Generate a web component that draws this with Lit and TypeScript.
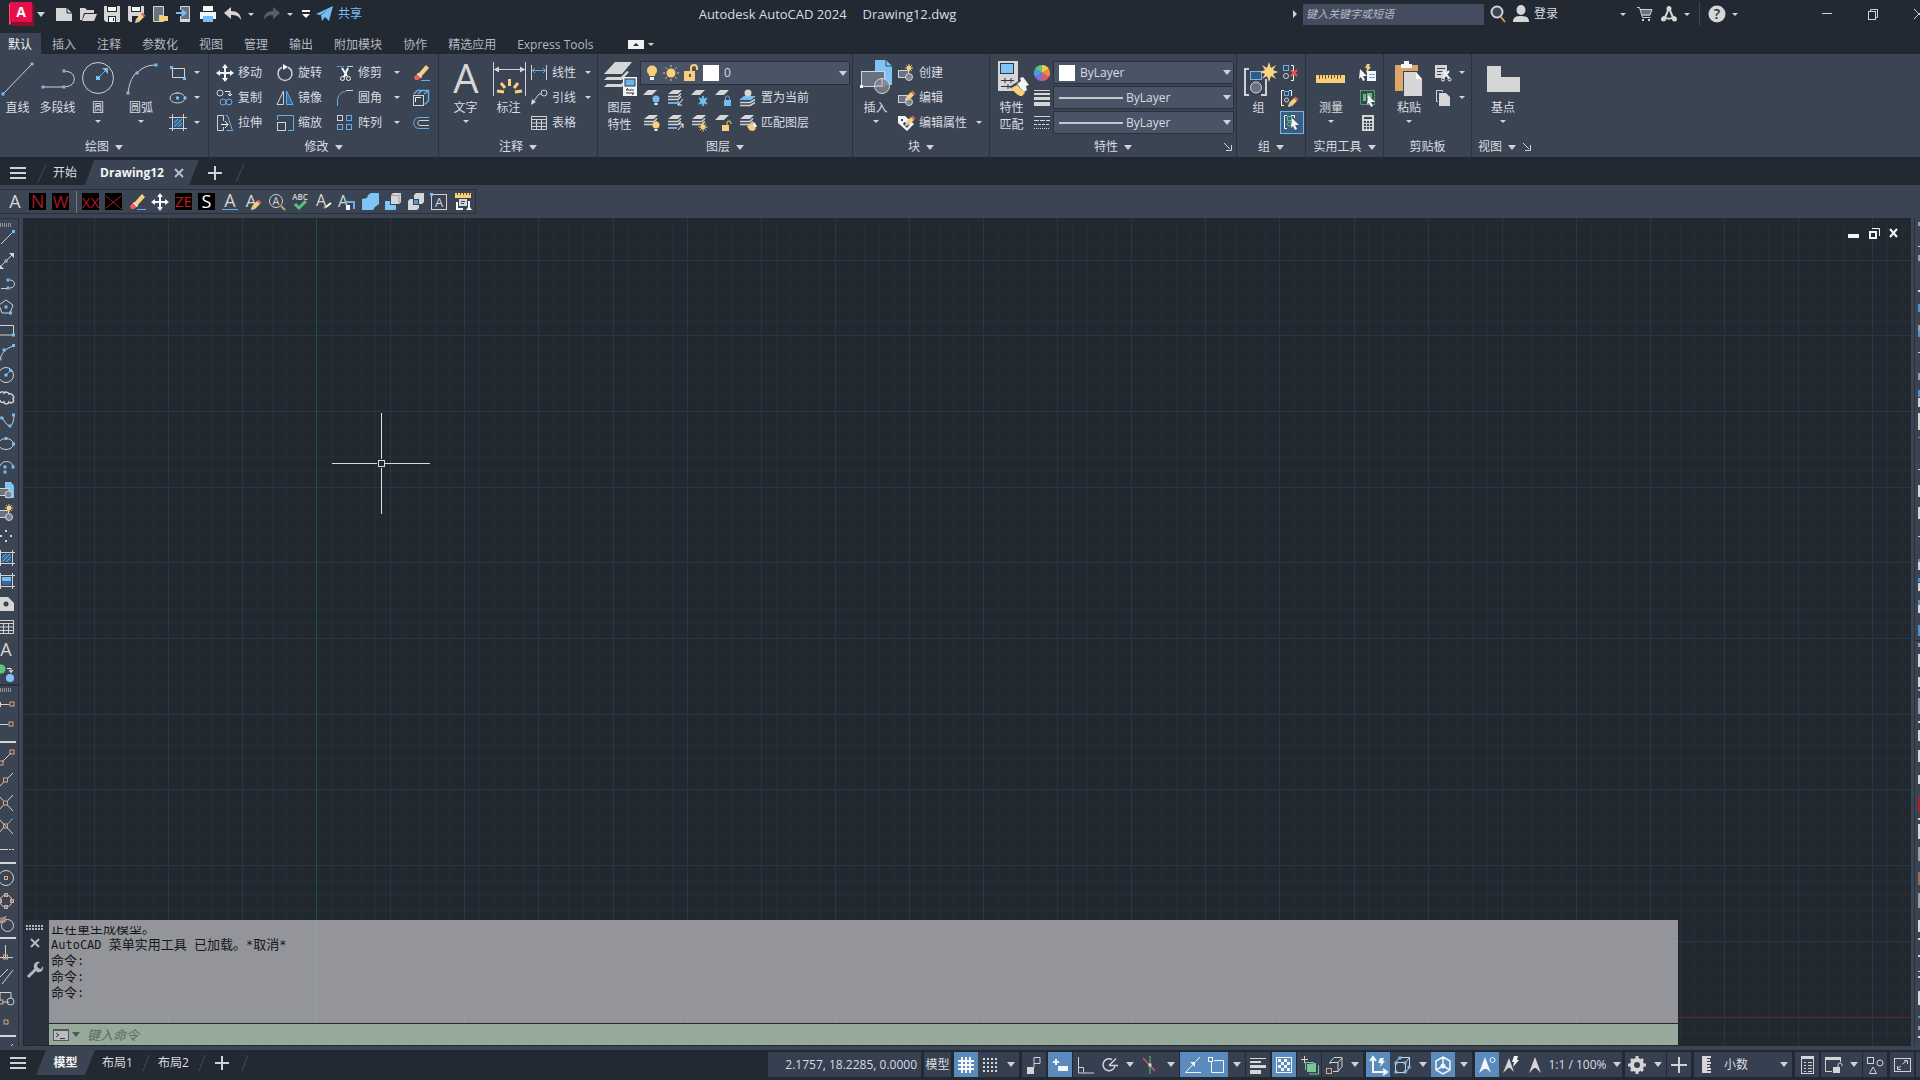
import { LitElement, html, css, svg, nothing } from "lit";
import { customElement, state } from "lit/decorators.js";
import { classMap } from "lit/directives/class-map.js";

/* ---------- icon drawing helpers ---------- */
const sq = (x: number, y: number, c = "bf", s = 3) =>
  svg`<rect class=${c} x=${x - s / 2} y=${y - s / 2} width=${s} height=${s}></rect>`;
const box = (x: number, y: number, s = 4) =>
  svg`<rect class="o" x=${x - s / 2} y=${y - s / 2} width=${s} height=${s}></rect>`;
const sheets = (x = 0, y = 0) => svg`
  <path class="wf" d="M${x + 5} ${y}h9l-4 4h-10z"></path>
  <path class="w" stroke-width="1.500" d="M${x} ${y + 6.5}h10l3-3M${x} ${y + 9.5}h10l3-3"></path>`;
const pencil = (x: number, y: number) => svg`
  <path class="yf" d="M${x} ${y + 5}l5-5 3 3-5 5z"></path>
  <path class="rf" d="M${x + 5} ${y}l1.500-1.500 3 3-1.500 1.500z"></path>
  <path class="wf" d="M${x} ${y + 5}l3 3-4 1z"></path>`;
const star = (x: number, y: number, r: number) => svg`
  <path class="y" d="M${x - r} ${y}h${2 * r}M${x} ${y - r}v${2 * r}M${x - r * 0.7} ${y - r * 0.7}l${r * 1.4} ${r * 1.4}M${x - r * 0.7} ${y + r * 0.7}l${r * 1.4} ${-r * 1.4}"></path>
  <circle class="yf" cx=${x} cy=${y} r=${r * 0.55}></circle>`;
const shapes = svg`
  <rect class="gf" x="1" y="7" width="10" height="7"></rect>
  <rect class="w" x="1.500" y="6.500" width="10" height="7"></rect>
  <circle class="gw" cx="12" cy="13" r="3.500"></circle>`;
const cursor = (x: number, y: number) =>
  svg`<path class="hf" d="M${x} ${y}l7 7h-4l2 4-2 1-2-4-2 2z"></path>`;
const bulb = (x: number, y: number, c: string) => svg`
  <circle class=${c} cx=${x} cy=${y} r="3.500"></circle>
  <rect class="hf" x=${x - 1.5} y=${y + 4} width="3" height="2"></rect>`;
const lock = (x: number, y: number, c: string, s: string, open: boolean) => svg`
  <path class=${s} d=${open ? `M${x + 5} ${y}v-2a2 2 0 0 1 4 0v1` : `M${x + 1.5} ${y}v-2a2 2 0 0 1 4 0v2`}></path>
  <rect class=${c} x=${x} y=${y} width="7" height="6"></rect>`;

const ICONS: Record<string, [number, number, unknown]> = {
  logo: [25, 24, svg`<path fill="#8e1030" d="M2 2h23v22H3z"></path><path fill="#ff4a72" d="M0 2l2-2v22l-2 1z"></path>
    <rect x="1" y="0" width="22" height="20" rx="1" fill="#e60f4a"></rect>
    <text x="12" y="15" text-anchor="middle" font-size="14" font-weight="700" fill="#fff">A</text>`],
  new: [18, 18, svg`<path class="wf" d="M1 3h11l5 5v8H1z"></path><path d="M12 3v5h5" stroke="#222933" fill="none"></path>`],
  open: [18, 18, svg`<path class="wf" d="M1 3h5l2 2h7v3H5l-2 7H1z"></path><path class="wf" d="M6 9h12l-3 7H3z"></path>`],
  save: [18, 18, svg`<path class="wf" d="M1 1h16v16H3l-2-2z"></path><path fill="#222933" d="M4 1h10v6H4zM5 11h8v6H5z"></path><path class="hf" d="M5 2h8v4H5zM6 12h6v5H6z"></path><path fill="#222933" d="M10 13h1v3h-1z"></path>`],
  saveas: [18, 18, svg`<path class="wf" d="M1 1h16v8l-8 8H3l-2-2z"></path><path fill="#222933" d="M4 1h10v6H4zM5 11h6v6H5z"></path><path class="hf" d="M5 2h8v4H5z"></path>${pencil(9, 9)}`],
  mobopen: [18, 18, svg`<rect class="gf" x="2" y="1" width="11" height="15"></rect><path class="w" d="M2.500 1.500h10v15h-10z"></path><path class="yf" d="M8 10h4l1 1h4v5H8z"></path>`],
  mobsave: [18, 18, svg`<rect class="gf" x="6" y="2" width="8" height="13"></rect><path class="w" d="M5.500 5V1.500h9v15h-9V11"></path><path class="wf" d="M5 14h10v3H5z"></path><path class="bf" d="M1 7h6V4l5 4-5 4V9H1z"></path>`],
  print: [18, 18, svg`<path class="hf" d="M4 1h10v5H4zM1 7h16v7H1z"></path><path class="bf" d="M4 11h10v6H4z"></path>`],
  undo: [18, 18, svg`<path class="wf" d="M0 8l7-6v4c6 0 10 3 10 9-2-4-5-5-10-5v4z"></path>`],
  redo: [18, 18, svg`<path fill="#575e69" d="M17 8l-7-6v4C4 6 1 9 1 15c2-4 5-5 9-5v4z"></path>`],
  qat: [10, 10, svg`<path class="hf" d="M1 1h8v2H1zM1 5h8l-4 4z"></path>`],
  plane: [18, 18, svg`<path class="bf" d="M0 9l17-8-4 15-4-4-3 4-1-6 8-6-9 6z"></path>`],
  search: [18, 18, svg`<circle class="gw2" cx="8" cy="7" r="5.500"></circle><path stroke="#d69a5c" stroke-width="2" d="M12 12l4 5"></path>`],
  user: [18, 18, svg`<ellipse class="wf" cx="9" cy="5" rx="4.500" ry="5"></ellipse><path class="wf" d="M1 17c0-5 3-6 8-6s8 1 8 6z"></path>`],
  cart: [18, 18, svg`<path class="gf" d="M4 4h12l-2 7H6z"></path><path class="w" d="M1 2.500h2.500l3 10h8M4 4.500h12l-2 5.500H6"></path><path class="wf" d="M6 14h2v2H6zM12 14h2v2h-2z"></path>`],
  apps: [18, 18, svg`<path class="w2" d="M9 3L4 15M9 3l5 12M3 11.500c4 3 8 3 12 0"></path><circle class="wf" cx="9" cy="3.500" r="2.500"></circle><circle class="wf" cx="3.500" cy="14" r="2.500"></circle><circle class="wf" cx="14.500" cy="14" r="2.500"></circle>`],
  help: [18, 18, svg`<circle class="wf" cx="9" cy="9" r="8.500"></circle><text x="9" y="14" text-anchor="middle" font-size="14" font-weight="600" fill="#222933">?</text>`],
  min: [14, 14, svg`<path class="w" d="M2 6.500h10"></path>`],
  restore: [14, 14, svg`<rect class="w" x="2.500" y="4.500" width="7" height="8"></rect><path class="w" d="M4.500 4V2.500h7v8H10"></path>`],
  close: [14, 14, svg`<path class="w" d="M2 2l10 10M12 2L2 12"></path>`],

  line: [36, 36, svg`<path class="w" d="M3 34L32 4"></path>${sq(3, 34)}${sq(32, 4)}`],
  pline: [36, 36, svg`<path class="w" d="M3 27h20M26 11.500c11 0 11 15 0 15"></path>${sq(3, 27)}${sq(24, 27)}${sq(24, 11)}`],
  circle: [36, 36, svg`<circle class="w" cx="18" cy="18" r="15.500"></circle><path class="b" d="M18 18l7-7"></path><path class="bf" d="M28 8v6l-6-6z"></path>${sq(18, 18, "bf", 4)}`],
  arc: [36, 36, svg`<path class="w" d="M5 33C6 25 8 18 13 13M15 12C20 7 26 5 33 5"></path>${sq(5, 33)}${sq(14, 13)}${sq(33, 5)}`],
  text: [36, 36, svg`<text class="wf" x="18" y="33" text-anchor="middle" font-size="40">A</text>`],
  dim: [36, 36, svg`<path class="w" d="M2.500 2v34M34.500 2v34M3 9.500h31"></path><path class="wf" d="M3 9.500l5-3v6zM34 9.500l-5-3v6z"></path>
    <path stroke="#f9cf7a" stroke-width="3" d="M18.500 19v7M10 23l4 5M27 23l-4 5M6 31l7 1M31 31l-7 1"></path>`],
  layers: [36, 36, svg`<path class="wf" d="M13 2h17L20 14H2zM5 17h14l6-6 2 1-7 8H2zM5 24h14l6-6 2 1-7 8H2z"></path>
    <rect class="hf" x="21" y="17" width="14" height="19"></rect><rect x="23" y="19" width="10" height="7" fill="#67b7ef" stroke="#2e3643"></rect>
    <path stroke="#2e3643" fill="none" d="M24 30h8M24 30l2-2M24 33h8M32 33l-2 2"></path>`],
  insert: [36, 36, svg`<path fill="#7fc4f6" d="M17 0h11l6 6v19H17z"></path><path d="M28 0v6h6" stroke="#3b4453" fill="none"></path>
    <rect x="3.500" y="11.500" width="23" height="15" fill="#6a7180" stroke="#d6d6d6"></rect><circle cx="24" cy="26" r="7.500" fill="#7d838f" fill-opacity=".8" stroke="#d6d6d6"></circle>
    <path class="w" d="M24 18v8h-7"></path>${sq(3.5, 26.5, "hf")}`],
  matchprop: [36, 36, svg`<rect class="wf" x="4" y="1" width="20" height="30"></rect><rect x="6.500" y="3.500" width="13" height="10" fill="#7fc4f6" stroke="#2e3643"></rect>
    <path stroke="#2e3643" fill="none" d="M7 20.500h13M7 26.500h9M11 18v5M14 24v5M17 18v5"></path>
    <path fill="#3b4453" d="M15 27l13-8 8 8-8 9z"></path><path class="yf" d="M17 28l6-3 8 8-3 3c-4 0-8-4-11-8z"></path><path class="hf" d="M23 24l4-3-1-3 3-1 6 8-3 1 1 4-3 2z"></path>`],
  group: [36, 36, svg`<path class="w2" d="M8 9H4v26h4M20 35h5V19"></path><rect x="9.500" y="11.500" width="11" height="8" fill="#375a7c" stroke="#6cb8ef"></rect>
    <circle cx="15" cy="27.500" r="5.500" fill="#6a7180" stroke="#d6d6d6"></circle>
    <path fill="#fcd583" d="M28 2l2 6 5-3-3 5 5 2-5 2 3 5-5-3-2 6-2-6-5 3 3-5-5-2 5-2-3-5 5 3z"></path>`],
  measure: [36, 36, svg`<path class="yf" d="M3 15h29v8H3z"></path><path stroke="#6b5527" d="M6.500 15v4M9.500 15v3M12.500 15v4M15.500 15v3M18.500 15v4M21.500 15v3M24.500 15v4M27.500 15v3"></path>`],
  paste: [36, 36, svg`<path fill="#dba869" d="M4 5h23v26H4z"></path><path class="hf" d="M10 4h3V1h5v3h3v4H10z"></path><path fill="#3b4453" d="M12 11h15v20H12z"></path><path class="wf" d="M13 12h12l6 7v17H13z"></path><path fill="#fff" d="M25 12v7h6z"></path>`],
  base: [36, 36, svg`<path class="wf" d="M2 6h14v11h19v15H2z"></path>`],

  rect: [18, 18, svg`<path class="w" d="M3.500 4.500h12v9h-12z"></path>${sq(2.5, 3.5)}${sq(15.5, 14.5)}`],
  ellipse: [18, 18, svg`<ellipse class="w" cx="8.500" cy="9" rx="7.500" ry="5"></ellipse>${sq(8.5, 9)}${sq(8.5, 4, "bf", 2)}${sq(16, 9, "bf", 3)}`],
  hatch: [18, 18, svg`<path class="w" d="M3.500 0v17M14.500 0v17M0 3.500h18M0 14.500h18"></path><rect x="5" y="5" width="8" height="8" fill="#34679a"></rect><path class="b" d="M5 9l4-4M5 13l8-8M9 13l4-4"></path>`],
  move: [18, 18, svg`<path class="h2" d="M9 3v12M3 9h12"></path><path class="hf" d="M9 0l3 4H6zM9 18l3-4H6zM0 9l4-3v6zM18 9l-4-3v6z"></path>`],
  rotate: [18, 18, svg`<path class="w" stroke-width="1.500" d="M12 3.200a7 7 0 1 1-6 0"></path><path class="hf" d="M7 0l5 3-5 3z"></path>`],
  trim: [18, 18, svg`<path class="b" stroke-dasharray="2 1" d="M1 2.500h7"></path><path class="w" d="M11 2.500h6"></path><path class="h2" d="M6 4l5 8M12 4l-4 9"></path><circle class="h" cx="6.500" cy="14.500" r="2"></circle><circle class="h" cx="12.500" cy="14.500" r="2"></circle>`],
  erase: [18, 18, svg`<path class="yf" d="M6 10l8-9 3 3-8 9z"></path><path class="rf" d="M2 13l4-4 4 4-4 3H3z"></path><path class="hf" d="M5 10l1-1 4 4-1 1z"></path><path class="b" d="M9 16.500h9"></path>`],
  copy: [18, 18, svg`<circle class="w" cx="4" cy="4" r="3"></circle><path class="h" d="M9 2.500h5v4M12 5l2 2 2-2"></path><circle class="b" cx="7" cy="13" r="3"></circle><circle class="b" cx="13" cy="13" r="3"></circle>`],
  mirror: [18, 18, svg`<path class="w" d="M7.500 2v13.500H1z"></path><path d="M10.500 2v13.500H17z" fill="#34679a" stroke="#65aee6"></path>`],
  fillet: [18, 18, svg`<path class="b" d="M1.500 17v-5c0-6 4-9 8-9.500"></path><path class="w" d="M10 1.500h7"></path>`],
  explode: [18, 18, svg`<path class="b" stroke-width="1.500" d="M1.500 5l4-3.500h11V12l-4 3.500M12 5l4.500-3.500M6 5l4-3.500"></path><rect class="w" x="1.500" y="6.500" width="10" height="10"></rect><path class="h" d="M3.500 13V8.500H9"></path>`],
  stretch: [18, 18, svg`<path class="w" d="M7.500 7V1.500h-6v15h6V13"></path><path class="b" d="M9.500 1.500h2l5 15h-6"></path><path class="h" d="M5 10.500h7M9 7l3 3.500L9 14"></path>`],
  scale: [18, 18, svg`<path class="b" d="M1.500 6V1.500h16v15H12"></path><rect class="w" x="1.500" y="8.500" width="8" height="8"></rect>`],
  array: [18, 18, svg`<rect class="w" x="1.500" y="1.500" width="5" height="5"></rect><rect class="b" x="10.500" y="1.500" width="5" height="5"></rect><rect class="b" x="1.500" y="10.500" width="5" height="5"></rect><rect class="b" x="10.500" y="10.500" width="5" height="5"></rect>`],
  offset: [18, 18, svg`<path class="b" d="M17 3.500H7c-7 0-7 11 0 11h10"></path><path class="w" d="M17 6.500H8c-3 0-3 5 0 5h9"></path>`],
  linear: [18, 18, svg`<path class="w" d="M1.500 1v15M16.500 1v15"></path><path class="b" d="M3 6.500h12M5 4L2.500 6.500 5 9M13 4l2.500 2.500L13 9"></path>`],
  leader: [18, 18, svg`<circle class="w" cx="14" cy="4" r="3"></circle><path class="w" d="M11 5H9L3 13"></path><path class="wf" d="M1 16l1-6 4 3z"></path>`],
  table: [18, 18, svg`<path class="w" d="M1.500 2.500h15v13h-15zM1.500 5.500h15M1.500 9h15M1.500 12.500h15M6.500 5.500v10M11.500 5.500v10"></path>`],
  bulb: [16, 18, svg`<circle class="yf" cx="8" cy="6.500" r="5"></circle><path class="yf" d="M5 10h6v2H5z"></path><path class="hf" d="M6 13h4v3H6z"></path>`],
  sun: [16, 18, svg`<path class="y" d="M8 1v16M0 9h16M2.500 3.500l11 11M13.500 3.500l-11 11"></path><circle cx="8" cy="9" r="6" fill="#4a5467"></circle><circle class="yf" cx="8" cy="9" r="4.500"></circle>`],
  unlock: [18, 18, svg`<path class="yf" d="M2 7h11v10H2z"></path><path stroke="#f9cf7a" stroke-width="2" fill="none" d="M9 7V4a3 3 0 0 1 6 0v2"></path><path fill="#4a5467" d="M7 10h2v3H7z"></path>`],
  layoff: [18, 18, svg`<path class="wf" d="M5 1h9l-5 5H0z"></path>${bulb(13, 10, "bf")}`],
  layiso: [18, 18, svg`${sheets(1, 1)}<path class="b2" d="M1 14h9"></path><path class="h" d="M16 10l-5 6M11 12v4h4"></path>`],
  layfrz: [18, 18, svg`<path class="wf" d="M5 1h9l-5 5H0z"></path><path class="b2" d="M12 7v10M8 9l8 6M16 9l-8 6"></path><circle class="bf" cx="12" cy="12" r="3"></circle>`],
  laylock: [18, 18, svg`<path class="wf" d="M5 1h9l-5 5H0z"></path>${lock(9, 11, "bf", "b", false)}`],
  laycur: [18, 18, svg`<path class="bf" d="M5 7h12l-5 4H0z"></path><path class="w" stroke-width="1.500" d="M1 13.500h10l5-3M1 16.500h10l5-3"></path><circle class="wf" cx="9" cy="4" r="3.500"></circle>`],
  layon: [18, 18, svg`${sheets(1, 1)}${bulb(13, 11, "yf")}`],
  layuniso: [18, 18, svg`${sheets(1, 1)}<path class="b2" d="M1 14h9"></path><path class="h" d="M11 16l5-6M12 10h4v4"></path>`],
  laythw: [18, 18, svg`${sheets(1, 1)}${star(12, 13, 4.5)}`],
  layunlock: [18, 18, svg`<path class="wf" d="M5 1h9l-5 5H0z"></path>${lock(7, 11, "yf", "y", true)}`],
  laymch: [18, 18, svg`${sheets(1, 1)}<path class="yf" d="M8 12l5-2 4 5-3 2c-3 0-5-2-6-5z"></path><path class="hf" d="M13 10l2-2 3 4-2 2z"></path>`],
  create: [18, 18, svg`${shapes}${star(12, 4, 4)}`],
  edit: [18, 18, svg`${shapes}${pencil(9, 3)}`],
  attr: [18, 18, svg`<path class="hf" d="M1 2h7l9 8-7 7L1 9z"></path><path fill="#3b4453" d="M4 5h2v2H4zM7 8l6 2-3 4-4-4z"></path>${pencil(9, 3)}`],
  wheel: [18, 18, svg`<path fill="#f7c948" d="M9 9V1a8 8 0 0 1 7 4z"></path><path fill="#f08a3c" d="M9 9l7-4a8 8 0 0 1 0 8z"></path><path fill="#e0566b" d="M9 9l7 4a8 8 0 0 1-7 4z"></path><path fill="#7d6fd6" d="M9 9v8a8 8 0 0 1-7-4z"></path><path fill="#4d9ae0" d="M9 9l-7 4a8 8 0 0 1 0-8z"></path><path fill="#5dc27f" d="M9 9L2 5a8 8 0 0 1 7-4z"></path>`],
  lweights: [18, 18, svg`<path class="wf" d="M1 1h16v1H1zM1 4h16v2H1zM1 8h16v3H1zM1 13h16v4H1z"></path>`],
  ltypes: [18, 18, svg`<path class="w" d="M1 2.500h16"></path><path class="w" stroke-dasharray="5 1" d="M1 6.500h16"></path><path class="w" stroke-dasharray="3 1" d="M1 10.500h16"></path><path class="w" stroke-dasharray="1 1" d="M1 14.500h16"></path>`],
  ungroup: [18, 18, svg`<rect class="b" x="3.500" y="1.500" width="5" height="5"></rect><circle class="w" cx="6" cy="12" r="2.500"></circle><path class="h" d="M11 1.500h2.500v15H11"></path><path stroke="#ef5350" stroke-width="2" d="M11 6l6 6M17 6l-6 6"></path>`],
  groupedit: [18, 18, svg`<path class="h" d="M4 1.500H1.500v15H4M9 1.500h2.500V7"></path><rect class="b" x="4.500" y="2.500" width="4" height="4"></rect><circle class="w" cx="6.500" cy="11" r="2"></circle>${pencil(9, 9)}`],
  groupsel: [18, 18, svg`<path class="h" d="M4 1.500H1.500v13H4M8 1.500h3.500V4"></path><rect class="g" x="4.500" y="2.500" width="4" height="4"></rect><circle class="g" cx="6.500" cy="10" r="2"></circle>${cursor(9, 4)}`],
  quicksel: [18, 18, svg`<path class="yf" d="M8 0h3l-1 3h2L7 9l1-5H6z"></path><rect class="hf" x="8" y="7" width="9" height="10"></rect><path class="b" d="M10 10.500h6M10 13.500h6"></path>${cursor(1, 5)}`],
  selall: [18, 18, svg`<rect class="g" stroke-dasharray="2 1" x="1.500" y="1.500" width="14" height="14"></rect><path fill="#5dc27f" d="M4 5h3v7H4zM8 4h5v5H8z"></path>${cursor(9, 6)}`],
  calc: [18, 18, svg`<rect class="wf" x="3" y="1" width="12" height="16"></rect><path fill="#3b4453" d="M5 3h8v2H5zM5 7h2v2H5zM8 7h2v2H8zM11 7h2v2h-2zM5 10h2v2H5zM8 10h2v2H8zM11 10h2v2h-2zM5 13h2v2H5zM8 13h2v2H8zM11 13h2v2h-2z"></path>`],
  cut: [18, 18, svg`<path class="wf" d="M1 1h12v7l-5 6H1z"></path><path stroke="#3b4453" d="M3 4.500h8M3 7.500h6M3 10.500h4"></path><path class="h2" d="M9 7l6 7M15 7l-6 7"></path><circle class="h" cx="9" cy="15.500" r="1.500"></circle><circle class="h" cx="15.500" cy="15.500" r="1.500"></circle>`],
  clip: [18, 18, svg`<path class="w" d="M4 12.500H2.500v-11h6V3"></path><path class="wf" d="M5 4h7l4 4v9H5z"></path>`],
  launcher: [10, 10, svg`<path class="w" d="M1 1l6 6M8.500 3v5.500H3"></path>`],

  tbA: [18, 18, svg`<text class="wf" x="9" y="15" text-anchor="middle" font-size="18">A</text>`],
  tbN: [18, 18, svg`<rect width="17" height="17"></rect><text x="8.500" y="15" text-anchor="middle" font-size="18" fill="#a81820">N</text>`],
  tbW: [18, 18, svg`<rect width="17" height="17"></rect><text x="8.500" y="15" text-anchor="middle" font-size="17" fill="#a81820">W</text>`],
  tbXX: [18, 18, svg`<rect width="17" height="17"></rect><text x="8.500" y="15" text-anchor="middle" font-size="15" fill="#b01820">XX</text>`],
  tbX: [18, 18, svg`<rect width="17" height="17"></rect><path stroke="#c4161c" d="M1 3l15 13M1 15L16 3"></path>`],
  tbZE: [18, 18, svg`<rect width="17" height="17"></rect><text x="8.500" y="14" text-anchor="middle" font-size="15" fill="#c4161c">ZE</text>`],
  tbS: [18, 18, svg`<rect width="17" height="17"></rect><text x="8.500" y="15" text-anchor="middle" font-size="18" fill="#fff">S</text>`],
  tbAu: [18, 18, svg`<text class="wf" x="9" y="14" text-anchor="middle" font-size="18">A</text><path class="b" d="M1 16.500h16"></path>`],
  tbAp: [18, 18, svg`<text class="wf" x="7" y="14" text-anchor="middle" font-size="17">A</text>${pencil(8, 8)}`],
  tbFind: [18, 18, svg`<circle class="w" cx="8" cy="8" r="6.500"></circle><text class="wf" x="8" y="12" text-anchor="middle" font-size="11">A</text><path stroke="#d69a5c" stroke-width="2" d="M13 13l4 4"></path>`],
  tbSpell: [18, 18, svg`<text class="wf" x="9" y="7" text-anchor="middle" font-size="8" font-weight="600">ABC</text><path stroke="#5dc27f" stroke-width="3" fill="none" d="M4 11l4 4 7-7"></path>`],
  tbStyle: [18, 18, svg`<text class="wf" x="7" y="13" text-anchor="middle" font-size="16">A</text><path stroke="#dba869" stroke-width="2" d="M10 15l3-2"></path><path class="h2" d="M12 14l5-4"></path>`],
  tbScale: [18, 18, svg`<text class="wf" x="6" y="14" text-anchor="middle" font-size="16">A</text><path class="b2" d="M9 9h8v7M9 9v3"></path><rect class="hf" x="9" y="12" width="4" height="5"></rect>`],
  union: [18, 18, svg`<path fill="#7fc4f6" d="M1 6l5-1 1-3 3-2h8v11l-4 3-2 3H1z"></path>`],
  subtract: [18, 18, svg`<path fill="#7fc4f6" d="M1 8h5v4h6v5H1z"></path><path class="wf" d="M7 2l2-2h8v9l-2 2H7z"></path><path stroke="#9aa0aa" fill="none" d="M7 2.500h8V11M15 2.500l2-2"></path>`],
  intersect: [18, 18, svg`<path class="wf" d="M7 2l2-2h8v9l-2 2H7zM1 8l2-2h9v9l-2 2H1z"></path><rect x="6.500" y="6.500" width="5" height="5" fill="#4d9ae0" stroke="#3b4453"></rect>`],
  tbBox: [18, 18, svg`<rect class="w" x="1.500" y="1.500" width="15" height="15"></rect><text class="wf" x="9" y="14" text-anchor="middle" font-size="13">A</text>${sq(1.5, 1.5)}`],
  convert: [18, 18, svg`<path class="yf" d="M1 0h16v5H1z"></path><path stroke="#6b5527" d="M3.500 0v2M6.500 0v2M9.500 0v2M12.500 0v2M15.500 0v2"></path><path class="h2" d="M3 9v7h6M15 16V8"></path><rect class="wf" x="5" y="6" width="8" height="7"></rect><path stroke="#3b4453" d="M7 8.500h4M7 10.500h3"></path><path class="hf" d="M12 17h6l-3-4z"></path>`],

  lLine: [18, 18, svg`<path class="w" d="M4 15L16 3"></path>${sq(16.5, 2.5)}`],
  lXline: [18, 18, svg`<path class="w" d="M2 16L16 2"></path><path class="wf" d="M17 1v5l-5-5zM2 17v-5l5 5z"></path>${sq(9, 9)}`],
  lPline: [18, 18, svg`<path class="w" d="M4 13.500h7M13 5c6 0 6 8 0 8"></path>${sq(11, 5)}${sq(11, 13)}`],
  lPoly: [18, 18, svg`<path class="w" d="M9 2l7 5-3 8H5L2 7z"></path>${sq(9, 9)}${sq(13.5, 15)}`],
  lRect: [18, 18, svg`<path class="w" d="M2 4.500h14.500V14H2"></path>${sq(16.5, 14)}`],
  lArc: [18, 18, svg`<path class="w" d="M3 17c1-6 5-12 14-14"></path>${sq(3, 16)}${sq(7, 7)}${sq(16.5, 2.5)}`],
  lCircle: [18, 18, svg`<circle class="w" cx="9" cy="9" r="7.500"></circle><path class="b" d="M9 9l5-5"></path>${sq(9, 9)}${sq(13.5, 4.5)}`],
  lCloud: [18, 18, svg`<path class="w" stroke-width="1.500" d="M3 4c2-2 4-1 4 0 2-2 5 0 5 1 3-1 6 3 4 5 2 3-2 5-4 3-1 3-5 2-5 0-2 1-4 0-4-2"></path>`],
  lSpline: [18, 18, svg`<path class="w" d="M1 6c6-3 6 7 12 8 3-1 4-7 4-12"></path>${sq(5, 6)}${sq(13, 14)}${sq(16.5, 3)}`],
  lEllipse: [18, 18, svg`<ellipse class="w" cx="9" cy="9" rx="7.500" ry="5.500"></ellipse>${sq(9, 3.5)}${sq(16.5, 9)}`],
  lEllArc: [18, 18, svg`<path class="w" d="M3 8c2-6 11-6 13 0"></path>${sq(8, 9)}${sq(16, 9)}${sq(8, 14)}`],
  lInsert: [18, 18, svg`<path fill="#7fc4f6" d="M8 1h6l3 4v12H8z"></path><rect class="gf" x="0" y="8" width="12" height="7"></rect><path class="w" d="M0 7.500h12v7H0"></path><circle class="gw" cx="11.500" cy="13.500" r="3.500"></circle>`],
  lPoint: [18, 18, svg`${sq(9, 4, "wf", 2)}${sq(9, 14, "wf", 2)}${sq(4, 9, "wf", 2)}${sq(14, 9, "wf", 2)}`],
  lHatch: [18, 18, svg`<path class="w" d="M3.500 1v16M15.500 1v16M1 3.500h17M1 14.500h17"></path><rect x="5" y="5" width="9" height="8" fill="#34679a"></rect><path class="b" d="M5 9l4-4M5 13l8-8M9 13l5-5"></path>`],
  lGrad: [18, 18, svg`<path class="w" d="M3.500 1v16M15.500 1v16M1 3.500h17M1 14.500h17"></path><rect x="5" y="5" width="9" height="8" fill="#34679a"></rect><rect class="bf" x="5" y="5" width="9" height="4"></rect>`],
  lRegion: [18, 18, svg`<path class="wf" d="M1 2h10l6 6v8H1z"></path><circle cx="9" cy="9" r="2.500" fill="#3b4453"></circle>`],
  lAdd: [18, 18, svg`<circle cx="4" cy="5" r="4.500" fill="#5dc27f"></circle><circle cx="13" cy="14" r="4" fill="#7fc4f6"></circle><path class="h" d="M10 4.500h4v4M12 6l2 2.500L16 6"></path>`],
  s1: [18, 18, svg`<path class="w" d="M2 9.500h10M3.500 7v5"></path>${box(15, 9)}`],
  s2: [18, 18, svg`<path class="w" d="M2 9.500h9"></path>${box(14, 9)}`],
  s3: [18, 18, svg`<path class="w" d="M5 14l9-9"></path>${box(15, 4)}${box(4, 15)}`],
  s4: [18, 18, svg`<path class="w" d="M2 16L16 2"></path><rect x="6" y="6" width="5" height="5" fill="#3b4453"></rect>${box(8.5, 9)}`],
  s5: [18, 18, svg`<path class="w" d="M1 1l15 16M16 1L1 17"></path><rect x="6" y="6" width="5" height="5" fill="#3b4453"></rect>${box(8.5, 9)}`],
  s6: [18, 18, svg`<path class="w" d="M1 1l15 16M7 10l-6 7"></path><path class="w" stroke-dasharray="2 1" d="M10 8l6-7"></path>${box(8.5, 9)}`],
  s7: [18, 18, svg`<path class="w" d="M1 9.500h8"></path><path class="w" stroke-dasharray="2 1" d="M9 9.500h9"></path>`],
  s8: [18, 18, svg`<circle class="w" cx="9" cy="9" r="7.500"></circle>${box(9, 9, 3)}`],
  s9: [18, 18, svg`<circle class="w" cx="9" cy="9" r="6"></circle>${box(9, 3, 3)}${box(9, 15, 3)}${box(3, 9, 3)}${box(15, 9, 3)}`],
  s10: [18, 18, svg`<circle class="w" cx="10.500" cy="10.500" r="6"></circle><path class="w" d="M3 8l6-7"></path>${box(6, 5)}`],
  s11: [18, 18, svg`<path class="w" d="M8.500 1v12M1 13.500h15"></path>${box(8.5, 13)}`],
  s12: [18, 18, svg`<path class="w" d="M1 12L11 2M5 17L16 3"></path>`],
  s13: [18, 18, svg`<path class="w" d="M3 11V2.500h11V8M5 12h7"></path><circle class="w" cx="13.500" cy="11.500" r="3.500"></circle>${box(4, 12)}`],
  s14: [18, 18, svg`${box(9, 9)}`],

  burger: [18, 14, svg`<path class="w2" d="M1 2h16M1 7h16M1 12h16"></path>`],
  plus: [16, 16, svg`<path class="w2" d="M1 8h14M8 1v14"></path>`],
  tabx: [10, 10, svg`<path stroke="#b9bec6" stroke-width="2" d="M1 1l8 8M9 1L1 9"></path>`],
  wrench: [18, 18, svg`<path stroke="#b4b7bd" stroke-width="3" d="M2 16l8-8"></path><path fill="#b4b7bd" d="M8 7c-1-4 2-7 6-6l-3 3 1 3 3 1 2-3c1 4-2 7-6 6z"></path>`],
  cmdx: [18, 18, svg`<path stroke="#b4b7bd" stroke-width="2" d="M5 5l8 8M13 5l-8 8"></path>`],
  prompt: [18, 14, svg`<rect x="1.500" y="1.500" width="15" height="11" fill="#b9bcc0" stroke="#52585f"></rect><path fill="#52585f" d="M1 1h16v2H1z"></path><path stroke="#3a3f46" fill="none" d="M4 5l3 2-3 2M8 10.500h5"></path>`],

  grid: [22, 22, svg`<path class="h" stroke-width="2" d="M7 3v16M11 3v16M15 3v16M3 7h16M3 11h16M3 15h16"></path>`],
  snap: [22, 22, svg`${[5, 9, 13, 17].map((x) => [5, 9, 13, 17].map((y) => sq(x, y, "wf", 2)))}`],
  infer: [22, 22, svg`<path class="wf" d="M4 13h7v7H4z"></path><path class="w" d="M11 13.500V3.500h6v6h-6"></path>`],
  dyn: [22, 22, svg`<path class="h2" d="M4 8h6M7 5v6"></path><path class="hf" d="M9 12h10v5H9z"></path>`],
  ortho: [22, 22, svg`<path class="w" d="M4.500 3v16H20M4.500 13.500h5v5"></path>`],
  polar: [22, 22, svg`<path class="w" stroke-width="1.500" d="M17 11.500a6 6 0 1 1-3-6M11 11.500l7-7M11 11.500h9"></path>`],
  iso: [22, 22, svg`<path stroke="#b8645e" stroke-width="1.500" d="M4 4l12 13"></path><path stroke="#4f9a62" stroke-width="1.500" d="M11 2v18"></path>${sq(11, 11, "wf")}`],
  otrack: [22, 22, svg`<path class="h" d="M19 3L4.500 18.500H20"></path><path class="hf" d="M9 8h5v5z"></path>`],
  osnap: [22, 22, svg`<path class="h" d="M6.500 8v10.500h12v-12H9"></path><rect class="h" x="3.500" y="3.500" width="4" height="4"></rect>`],
  lw: [22, 22, svg`<path class="wf" d="M3 4h16v1H3zM3 7h11v2H3zM3 11h16v3H3zM3 16h11v4H3z"></path>`],
  transp: [22, 22, svg`<rect class="h" x="3.500" y="3.500" width="15" height="15"></rect>${[0, 1, 2, 3].map((r) => [0, 1].map((c) => sq(6.5 + c * 6 + (r % 2) * 3, 6.5 + r * 3, "hf")))}`],
  cycle: [22, 22, svg`<path class="w" d="M3 5.500h7M6.500 2v7"></path><path fill="#7cc79a" d="M9 10l9-1v9H9z"></path><path stroke="#7cc79a" fill="none" d="M7.500 16V8.500H16M20.500 11v9H11"></path>`],
  osnap3: [22, 22, svg`<path class="w" d="M7 10V8l4-4.500h8v9l-4 5H10M7 8.500h8v9M15 8.500l4-4.500"></path><rect class="o" x="3.500" y="14.500" width="5" height="5"></rect>`],
  ducs: [22, 22, svg`<path class="h2" d="M6 19V4M5 18h14M3 7l3-4 3 4M16 15l4 3-4 3"></path><path class="hf" d="M13 4h4l-1 3h2l-5 6 1-4h-3z"></path>`],
  filter: [22, 22, svg`<path class="w" d="M4.500 8.500h10v10h-10zM4.500 8.500l4-5h10v10l-4 5M14.500 8.500l4-5"></path>${sq(5, 9)}${sq(14, 9)}${sq(5, 18)}${sq(14, 18)}${sq(9, 4)}${sq(18, 13)}`],
  gizmo: [22, 22, svg`<path class="h" stroke-width="1.500" d="M11 3v9M11 12l-7 4M11 12l7 4M11 3l7 4v9l-7 4-7-4V7z"></path><circle class="hf" cx="11" cy="12" r="2.500"></circle>`],
  annovis: [22, 22, svg`<path class="hf" d="M9 3l6 16-4-4H8l-5 4z"></path><circle class="h" cx="16.500" cy="6" r="2.500"></circle>`],
  annoauto: [22, 22, svg`<path class="wf" d="M9 4l5 14-4-4H8l-5 5z"></path><path class="hf" d="M14 2h4l-1 4h2l-6 7 1-5h-2z"></path>`],
  anno: [22, 22, svg`<path class="wf" d="M11 3l6 16-5-5h-2l-5 5z"></path>`],
  gear: [22, 22, svg`<circle cx="11" cy="11" r="5" fill="none" stroke="#d6d6d6" stroke-width="4"></circle><path class="w" stroke-width="3" d="M11 2v3M11 17v3M2 11h3M17 11h3M5 5l2 2M15 15l2 2M17 5l-2 2M5 17l2-2"></path>`],
  splus: [22, 22, svg`<path class="w2" d="M3 11h16M11 3v16"></path>`],
  ruler: [22, 22, svg`<path class="wf" d="M7 2h9v2h-4v1h3v2h-3v1h4v2h-4v1h3v2h-3v1h4v2h-4v1h4v2H7z"></path>`],
  qprops: [22, 22, svg`<rect class="w" x="5.500" y="2.500" width="12" height="17"></rect><path class="wf" d="M5 2h13v3H5z"></path><path class="w" d="M8 8.500h2M12 8.500h4M8 11.500h2M12 11.500h4M8 14.500h2M12 14.500h4M8 17.500h2M12 17.500h4"></path>`],
  lockui: [22, 22, svg`<path class="w" d="M10 17.500H3.500v-14h15V8"></path><path class="wf" d="M3 3h16v3H3z"></path>${lock(11, 13, "wf", "w", true)}`],
  isolate: [22, 22, svg`<rect class="w" x="3.500" y="3.500" width="6" height="6"></rect><circle class="w" cx="16" cy="9" r="3"></circle><path class="w" d="M9 13l3.500 6.500h-7z"></path>`],
  full: [22, 22, svg`<rect class="w" x="3.500" y="4.500" width="16" height="13"></rect><path class="w" d="M11.500 10l4-3M13 6.500h3.500V10M10 12l-4 3M6.500 12v3.500H10"></path>`],
};

const icon = (name: string) => {
  const [w, h, body] = ICONS[name];
  return html`<svg class="ic" width=${w} height=${h} viewBox="0 0 ${w} ${h}" aria-hidden="true">${body}</svg>`;
};
const arrow = html`<i class="ar"></i>`;
const bigArrow = html`<i class="ar lg"></i>`;

/* Drawing grid: major pitch of the model space on each axis, five minor cells per major. */
const GRID = { x0: 293.6, y0: 799, dx: 74.1, dy: 75.7 };
const gridLines = (minor: boolean) => {
  const parts: string[] = [];
  for (let i = -20; i < 260; i++) {
    if ((i % 5 === 0) === minor) continue;
    parts.push(`M${Math.floor(GRID.x0 + (i * GRID.dx) / 5) + 0.5} 0v2400`);
  }
  for (let j = -90; j < 60; j++) {
    if ((j % 5 === 0) === minor) continue;
    parts.push(`M0 ${Math.floor(GRID.y0 + (j * GRID.dy) / 5) + 0.5}h4200`);
  }
  return parts.join("");
};
const MINOR = gridLines(true);
const MAJOR = gridLines(false);

/* Visible slivers of the palette that is docked past the right edge: [y, height, colour]. */
const SLIVERS: [number, number, string][] = [
  [4, 4, "g"], [28, 1, "w"], [37, 6, "g"], [72, 2, "w"], [86, 8, "b"], [107, 6, "g"], [113, 6, "b"], [134, 1, "w"],
  [155, 7, "g"], [172, 7, "b"], [180, 9, "w"], [195, 17, "w"], [219, 1, "b"], [251, 1, "w"], [267, 12, "w"],
  [289, 12, "w"], [318, 1, "w"], [341, 3, "b"], [344, 8, "w"], [360, 4, "b"], [365, 8, "w"], [382, 5, "b"],
  [387, 8, "w"], [407, 11, "b"], [422, 1, "d"], [425, 4, "g"], [436, 13, "w"], [459, 10, "w"], [471, 2, "g"],
  [480, 16, "g"], [503, 2, "w"], [512, 11, "w"], [532, 12, "w"], [557, 9, "w"], [579, 15, "r"], [600, 2, "w"],
  [606, 15, "w"], [629, 14, "g"], [654, 13, "o"], [675, 15, "g"], [702, 12, "w"], [720, 2, "w"], [737, 2, "w"],
  [753, 1, "w"], [758, 2, "w"], [773, 14, "w"], [798, 2, "b"], [808, 4, "g"], [818, 2, "w"],
];
const SLIVER_COLOURS: Record<string, string> = { w: "#d6d6d6", g: "#9a9fa8", b: "#4f93cf", r: "#a8202a", o: "#94705a", d: "#252c37" };

const RIBBON_TABS = ["默认", "插入", "注释", "参数化", "视图", "管理", "输出", "附加模块", "协作", "精选应用", "Express Tools"];
const QAT: [string, string][] = [["new", "新建"], ["open", "打开"], ["save", "保存"], ["saveas", "另存为"], ["mobopen", "从移动端打开"], ["mobsave", "保存到移动端"], ["print", "打印"]];
const TOOLBAR: string[] = ["tbXX", "tbX", "erase", "move", "tbZE", "tbS", "tbAu", "tbAp", "tbFind", "tbSpell", "tbStyle", "tbScale", "union", "subtract", "intersect", "tbBox", "convert"];
const DRAW = ["lLine", "lXline", "lPline", "lPoly", "lRect", "lArc", "lCircle", "lCloud", "lSpline", "lEllipse", "lEllArc", "lInsert", "create", "lPoint", "lHatch", "lGrad", "lRegion", "table", "tbA", "lAdd"];
const SNAPS = [["s3", "s4", "s5", "s6", "s7"], ["s8", "s9", "s10"], ["s11", "s12", "s13", "s14"]];

@customElement("app-root")
export class AppRoot extends LitElement {
  @state() private ribbonTab = RIBBON_TABS[0];
  @state() private toggles = new Set(["grid", "dyn", "otrack", "osnap", "transp", "ducs", "gizmo", "annovis"]);

  static styles = css`
    :host { display: flex; flex-direction: column; height: 100vh; overflow: hidden; background: #222933; color: #d9dce1;
      font: 12px/16px "Open Sans", "Noto Sans CJK SC", sans-serif; --slate: #3b4453; --edge: #2a313d; --field: #4a5467; --cell: #374050; }
    * { box-sizing: border-box; }
    button { display: flex; align-items: center; justify-content: center; margin: 0; padding: 0; border: 0; background: none; color: inherit; font: inherit; white-space: nowrap; cursor: default; }
    input, select { font: inherit; color: inherit; border: 0; margin: 0; background: none; outline: 0; min-width: 0; border-radius: 0; }
    select { appearance: none; padding: 0; }
    option { background: #4a5467; }
    .ic { display: block; flex: none; overflow: visible; }
    .ic text { font-family: "Open Sans", sans-serif; }
    .w, .w2, .h, .h2, .b, .b2, .y, .g, .o, .gw, .gw2 { fill: none; stroke: #d0d2d5; }
    .w2, .h2, .b2, .gw2 { stroke-width: 2; }
    .h, .h2 { stroke: #f4f5f6; }
    .b, .b2 { stroke: #65aee6; }
    .y { stroke: #f9cf7a; }
    .g { stroke: #5dc27f; }
    .o { stroke: #e0a57e; }
    .gw { fill: #7d838f; }
    .gw2 { fill: #3d4450; }
    .wf { fill: #d6d6d6; } .hf { fill: #f4f5f6; } .bf { fill: #72bdf3; } .yf { fill: #f9cf7a; } .rf { fill: #e96060; } .gf { fill: #6a7180; }
    .ar { display: block; flex: none; width: 0; height: 0; border: 3px solid transparent; border-top-color: #d0d2d5; border-bottom: 0; }
    .ar.lg { border-width: 5px 4px 0; }
    .ar.right { border: 4px solid transparent; border-left-color: #d0d2d5; border-right: 0; }

    .title { display: flex; height: 33px; flex: none; align-items: center; padding: 0 0 5px; }
    .qat { display: flex; align-items: center; padding-left: 9px; }
    .qat .logo { gap: 3px; margin-right: 7px; }
    .qat .tool { width: 24px; height: 24px; }
    .qat .ud { gap: 6px; height: 24px; margin: 0 5px 0 4px; }
    .qat .more { margin: 0 5px 0 3px; }
    .share { gap: 4px; color: #79bdee; }
    .caption { flex: 1; display: flex; justify-content: center; gap: 16px; margin: 0; font-size: 13px; font-weight: 400; }
    .info { display: flex; align-items: center; }
    .info .field { display: flex; width: 181px; height: 21px; margin: 0 5px 0 6px; background: #444d60; padding: 0 3px; }
    .info .field input { width: 100%; font-size: 11px; font-style: italic; padding: 0; }
    .info input::placeholder { color: #b6bbc5; opacity: 1; }
    .info .who { gap: 4px; margin: 0 10px 0 5px; height: 22px; }
    .info .who .ar { margin-left: 58px; }
    .info .apps { gap: 6px; margin: 0 9px 0 6px; }
    .info .help { gap: 6px; border-left: 1px solid #3b4453; padding-left: 8px; height: 24px; }
    .info .win { width: 46px; height: 24px; }
    .info .first { margin-left: 66px; }
    .info .last { width: 30px; justify-content: flex-end; margin-right: -6px; }

    .rtabs { display: flex; height: 21px; flex: none; gap: 1px; color: #b4b8bf; }
    .rtabs button { padding: 2px 10px 0; height: 21px; }
    .rtabs button:first-child { padding: 2px 9px 0 8px; }
    .rtabs button.on { background: var(--slate); color: #eef0f2; }
    .rtabs .view { padding: 2px 0 0 24px; gap: 4px; }
    .rtabs .view b { display: flex; align-items: center; justify-content: center; width: 16px; height: 9px; background: #eef0f2; }
    .rtabs .view b i { border: 3px solid transparent; border-bottom-color: #222933; border-top: 0; }

    .ribbon { display: flex; height: 103px; flex: none; background: var(--slate); }
    .panel { display: flex; flex-direction: column; flex: none; border-right: 1px solid var(--edge); padding-top: 6px; }
    .panel .body { display: flex; height: 75px; }
    .panel h2 { display: flex; flex: 1; align-items: center; justify-content: center; gap: 6px; margin: 0; padding-top: 2px; font: inherit; color: #d9dce1; position: relative; }
    .panel .end { position: absolute; right: 3px; }
    .big { flex-direction: column; justify-content: flex-start; width: 43px; padding-top: 0; line-height: 17px; }
    .big .ic { margin-bottom: 3px; }
    .big .ar { margin-top: 4px; }
    .big.w35 { width: 35px; } .big.w36 { width: 36px; } .big.w45 { width: 45px; } .big.w50 { width: 50px; }
    .col { display: flex; flex-direction: column; }
    .sm { height: 25px; justify-content: flex-start; gap: 4px; }
    .sm .ar { margin-left: 5px; }
    .sm.mini .ar { margin-left: 3px; }
    .mod { display: grid; grid-template-columns: 60px 60px 76px 20px; grid-auto-rows: 25px; padding-left: 7px; }
    .mod .sm .ar { margin-left: 8px; }
    .draw { width: 209px; } .modify { width: 230px; } .note { width: 159px; } .layer { width: 255px; } .block { width: 137px; }
    .props { width: 247px; } .grp { width: 69px; } .util { width: 78px; } .clipb { width: 88px; } .viewp { width: 66px; border: 0; }
    .note .body { padding-left: 5px; }
    .block .body { padding-left: 1px; }
    .viewp .body { padding-left: 6px; }
    .draw .col, .util .col { margin-left: 3px; }
    .combo { display: flex; align-items: center; gap: 3px; height: 23px; border: 1px solid var(--edge); background: var(--field); padding: 0 2px 0 5px; }
    .combo select { flex: 1; align-self: stretch; padding-left: 2px; }
    .combo .sw { width: 16px; height: 16px; flex: none; background: #fff; }
    .combo .ln { width: 64px; height: 2px; flex: none; background: #c3c7ce; margin-right: -2px; }
    .lrows { flex: 1; padding: 0 2px 0 0; margin-left: -1px; }
    .lrows .row { display: flex; height: 25px; gap: 6px; align-items: center; padding-left: 3px; }
    .lrows .combo { margin-top: 1px; height: 24px; padding-left: 3px; }
    .prow { display: flex; align-items: center; gap: 2px; height: 25px; }
    .prow .combo { flex: 1; }
    .pcol { flex: 1; padding-right: 2px; }
    .sel { width: 24px; height: 23px; margin: 1px 0; border: 1px solid #6cb8ef; background: #3d5d7e; }

    .dtabs { display: flex; height: 28px; flex: none; align-items: center; padding-top: 3px; }
    .dtabs .menu { margin: 0 10px 0 9px; }
    .slash { width: 10px; height: 18px; flex: none; }
    .slash path { stroke: #454d5b; fill: none; }
    .dtabs .start { margin: 0 8px 0 6px; }
    .dtabs .cur { height: 25px; width: 114px; gap: 10px; background: var(--slate); clip-path: polygon(9px 0, 100% 0, 104px 100%, 0 100%); font-weight: 700; color: #f3f4f6; }
    .dtabs .add { margin: 0 12px 0 8px; }

    .tools { display: flex; height: 33px; flex: none; background: var(--slate); padding: 4px 0; }
    .tbar { display: flex; width: 476px; border: 1px solid var(--edge); border-left: 0; align-items: center; justify-content: space-between; padding-right: 1px; }
    .tbar .a { display: flex; padding: 0 4px 0 3px; border-right: 1px solid #737a86; }
    .tbar button { width: 23px; height: 22px; }
    .tbar .c { display: flex; flex: 1; justify-content: space-between; padding-left: 2px; }

    .work { display: flex; flex: 1; min-height: 0; background: var(--slate); border-bottom: 4px solid var(--slate); }
    .pal { width: 19px; flex: none; overflow: hidden; border: 1px solid var(--edge); border-left: 0; border-bottom: 0; padding-top: 4px; }
    .pal button { width: 18px; height: 23px; margin-left: -3px; }
    .pal .grip { height: 4px; margin: 0 6px 0 0; background: repeating-linear-gradient(90deg, #8e949e 0 1px, transparent 1px 2px); }
    .pal .set { display: flex; flex-direction: column; justify-content: space-between; height: 457px; }
    .pal .set button { height: 22px; }
    .pal .half { height: 17px; }
    .pal hr { height: 2px; margin: 2px 2px 2px 0; border: 0; background: #d6d6d6; }
    .pal hr.dark { margin: 0 0 2px; background: var(--edge); }
    .pal .tick { height: 7px; }
    .canvas { position: relative; flex: 1; min-width: 0; margin-left: 4px; background: #212830; overflow: hidden; }
    .canvas > svg { position: absolute; inset: 0; width: 100%; height: 100%; }
    .mdi { position: absolute; top: 6px; right: 10px; display: flex; gap: 6px; }
    .rpal { width: 9px; flex: none; padding-left: 3px; overflow: hidden; }
    .rpal svg { display: block; border-left: 1px solid var(--edge); width: 6px; height: 100%; }

    .cmd { position: absolute; left: 1px; right: 233px; bottom: 1px; height: 125px; display: flex; }
    .cmd .side { width: 25px; flex: none; display: flex; flex-direction: column; align-items: center; gap: 9px; padding: 5px 3px 0 0; background: #2b313c; }
    .cmd .side .grip { width: 18px; height: 6px; margin-bottom: -6px; background: radial-gradient(circle at 1px 1px, #b4b7bd 1px, transparent 1px) 0 0 / 3px 3px; }
    .cmd .main { flex: 1; min-width: 0; display: flex; flex-direction: column; gap: 1px; }
    .hist { flex: 1; background: rgba(186, 186, 190, .75); padding: 6px 2px 0; color: #15171a; font: 13px/16px "DejaVu Sans Mono", "Noto Sans CJK SC", monospace; }
    .hist .clip { height: 94px; overflow: hidden; display: flex; flex-direction: column; }
    .hist p { margin: 0; height: 16px; white-space: pre; }
    .hist p:first-child { margin-top: -5px; }
    .hist span { font-size: 12px; }
    .entry { display: flex; align-items: center; height: 21px; background: rgba(189, 212, 191, .75); padding: 0 4px 0 3px; gap: 2px; }
    .entry input { flex: 1; font: italic 13px/16px "Noto Sans CJK SC", sans-serif; padding: 0 0 0 5px; color: #222; }
    .entry input::placeholder { color: #5b6a60; opacity: 1; }
    .entry .ar { border-top-color: #4c565c; }
    .entry .ar.up { border-width: 0 3px 4px; border-bottom-color: #4c565c; }

    .status { display: flex; height: 30px; flex: none; align-items: flex-start; justify-content: space-between; overflow: hidden; }
    .layouts { display: flex; align-items: center; height: 25px; }
    .layouts .menu { margin: 0 9px; }
    .layouts .model { width: 59px; height: 25px; background: var(--slate); clip-path: polygon(10px 0, 100% 0, 49px 100%, 0 100%); font-weight: 700; color: #f3f4f6; }
    .layouts .lay { padding: 0 8px 0 7px; }
    .layouts .add { margin: 0 10px 0 7px; }
    .cells { display: flex; padding-top: 2px; height: 27px; }
    .cells > * { flex: none; height: 25px; background: var(--cell); }
    .cells .c { width: 24px; }
    .cells .d { width: 17px; }
    .cells .on { background: #5b8bbd; }
    .cells .g1 { margin-left: 1px; } .cells .g2 { margin-left: 2px; } .cells .g3 { margin-left: 3px; }
    .cells .xy { width: 153px; display: flex; align-items: center; justify-content: flex-end; padding-right: 4px; }
    .cells .ms { width: 27px; }
    .cells .sc { width: 75px; gap: 6px; }
    .cells .units { width: 98px; display: flex; align-items: center; padding: 0 4px 0 1px; gap: 7px; }
    .cells .units select { flex: 1; align-self: stretch; }
    .cells .cut { width: 4px; }
  `;

  private flip(name: string) {
    const next = new Set(this.toggles);
    if (!next.delete(name)) next.add(name);
    this.toggles = next;
  }

  private big(name: string, label: string[], more = true, cls = "") {
    return html`<button class="big ${cls}">${icon(name)}${label.map((t) => html`<span>${t}</span>`)}${more ? arrow : nothing}</button>`;
  }
  private small(name: string, label = "", more = false) {
    return html`<button class="sm" aria-label=${label || name}>${icon(name)}${label ? html`<span>${label}</span>` : nothing}${more ? arrow : nothing}</button>`;
  }
  private cell(name: string, gap = "") {
    const on = this.toggles.has(name);
    return html`<button class="c ${gap} ${on ? "on" : ""}" aria-label=${name} aria-pressed=${on} @click=${() => this.flip(name)}>${icon(name)}</button>`;
  }
  private more(label: string) {
    return html`<button class="d" aria-label="${label} 选项">${bigArrow}</button>`;
  }
  private iconMenu(name: string) {
    return html`<button class="sm mini" aria-label=${name}>${icon(name)}${arrow}</button>`;
  }
  private panel(cls: string, title: string, body: unknown, tail: unknown = bigArrow) {
    return html`<section class="panel ${cls}"><div class="body">${body}</div><h2><span>${title}</span>${tail}</h2></section>`;
  }

  private renderTitle() {
    return html`<header class="title">
      <div class="qat">
        <button class="logo" aria-label="应用程序菜单">${icon("logo")}${bigArrow}</button>
        ${QAT.map(([n, l]) => html`<button class="tool" aria-label=${l}>${icon(n)}</button>`)}
        <button class="ud" aria-label="放弃">${icon("undo")}${arrow}</button>
        <button class="ud" aria-label="重做">${icon("redo")}${arrow}</button>
        <button class="more" aria-label="自定义快速访问工具栏">${icon("qat")}</button>
        <button class="share">${icon("plane")}共享</button>
      </div>
      <h1 class="caption"><span>Autodesk AutoCAD 2024</span><span>Drawing12.dwg</span></h1>
      <div class="info">
        <i class="ar right"></i>
        <label class="field"><input type="search" aria-label="搜索" placeholder="键入关键字或短语" /></label>
        <button aria-label="搜索">${icon("search")}</button>
        <button class="who">${icon("user")}登录${arrow}</button>
        <button aria-label="应用商店">${icon("cart")}</button>
        <button class="apps" aria-label="Autodesk App">${icon("apps")}${arrow}</button>
        <button class="help" aria-label="帮助">${icon("help")}${arrow}</button>
        <button class="win first" aria-label="最小化">${icon("min")}</button>
        <button class="win" aria-label="还原">${icon("restore")}</button>
        <button class="win last" aria-label="关闭">${icon("close")}</button>
      </div>
    </header>`;
  }

  private renderRibbon() {
    return html`
      <nav class="rtabs">
        ${RIBBON_TABS.map((t) => html`<button class=${classMap({ on: t === this.ribbonTab })} @click=${() => (this.ribbonTab = t)}>${t}</button>`)}
        <button class="view" aria-label="最小化功能区"><b><i></i></b>${arrow}</button>
      </nav>
      <div class="ribbon">
        ${this.panel("draw", "绘图", html`
          ${this.big("line", ["直线"], false, "w35")}${this.big("pline", ["多段线"], false, "w45")}${this.big("circle", ["圆"], true, "w36")}${this.big("arc", ["圆弧"], true, "w50")}
          <div class="col">${this.iconMenu("rect")}${this.iconMenu("ellipse")}${this.iconMenu("hatch")}</div>`)}
        ${this.panel("modify", "修改", html`<div class="mod">
          ${this.small("move", "移动")}${this.small("rotate", "旋转")}${this.small("trim", "修剪", true)}${this.small("erase")}
          ${this.small("copy", "复制")}${this.small("mirror", "镜像")}${this.small("fillet", "圆角", true)}${this.small("explode")}
          ${this.small("stretch", "拉伸")}${this.small("scale", "缩放")}${this.small("array", "阵列", true)}${this.small("offset")}</div>`)}
        ${this.panel("note", "注释", html`${this.big("text", ["文字"])}${this.big("dim", ["标注"], false)}
          <div class="col">${this.small("linear", "线性", true)}${this.small("leader", "引线", true)}${this.small("table", "表格")}</div>`)}
        ${this.panel("layer", "图层", html`${this.big("layers", ["图层", "特性"], false)}
          <div class="lrows">
            <label class="combo">${icon("bulb")}${icon("sun")}${icon("unlock")}<i class="sw"></i><select aria-label="图层"><option>0</option></select>${bigArrow}</label>
            <div class="row">${["layoff", "layiso", "layfrz", "laylock"].map((n) => this.small(n))}${this.small("laycur", "置为当前")}</div>
            <div class="row">${["layon", "layuniso", "laythw", "layunlock"].map((n) => this.small(n))}${this.small("laymch", "匹配图层")}</div>
          </div>`)}
        ${this.panel("block", "块", html`${this.big("insert", ["插入"])}
          <div class="col">${this.small("create", "创建")}${this.small("edit", "编辑")}${this.small("attr", "编辑属性", true)}</div>`)}
        ${this.panel("props", "特性", html`${this.big("matchprop", ["特性", "匹配"], false)}
          <div class="pcol">
            <div class="prow">${icon("wheel")}<label class="combo"><i class="sw"></i><select aria-label="对象颜色"><option>ByLayer</option></select>${bigArrow}</label></div>
            <div class="prow">${icon("lweights")}<label class="combo"><i class="ln"></i><select aria-label="线宽"><option>ByLayer</option></select>${bigArrow}</label></div>
            <div class="prow">${icon("ltypes")}<label class="combo"><i class="ln"></i><select aria-label="线型"><option>ByLayer</option></select>${bigArrow}</label></div>
          </div>`, html`${bigArrow}<button class="end" aria-label="特性选项板">${icon("launcher")}</button>`)}
        ${this.panel("grp", "组", html`${this.big("group", ["组"], false)}
          <div class="col">${this.small("ungroup")}${this.small("groupedit")}<button class="sel" aria-label="启用组选择" aria-pressed="true">${icon("groupsel")}</button></div>`)}
        ${this.panel("util", "实用工具", html`${this.big("measure", ["测量"], true, "w50")}
          <div class="col">${this.small("quicksel")}${this.small("selall")}${this.small("calc")}</div>`)}
        ${this.panel("clipb", "剪贴板", html`${this.big("paste", ["粘贴"], true, "w50")}
          <div class="col">${this.iconMenu("cut")}${this.iconMenu("clip")}</div>`, nothing)}
        ${this.panel("viewp", "视图", html`${this.big("base", ["基点"], true, "w50")}`, html`${bigArrow}<button aria-label="视图设置">${icon("launcher")}</button>`)}
      </div>`;
  }

  private renderTabs() {
    const slash = html`<svg class="slash" viewBox="0 0 10 18"><path d="M1 18L9 0"></path></svg>`;
    return html`
      <nav class="dtabs">
        <button class="menu" aria-label="文件选项卡菜单">${icon("burger")}</button>${slash}
        <button class="start">开始</button>
        <button class="cur">Drawing12${icon("tabx")}</button>
        <button class="add" aria-label="新图形">${icon("plus")}</button>${slash}
      </nav>
      <div class="tools"><div class="tbar">
        <div class="a">${["tbA", "tbN", "tbW"].map((n) => html`<button aria-label=${n}>${icon(n)}</button>`)}</div>
        <div class="c">${TOOLBAR.map((n) => html`<button aria-label=${n}>${icon(n)}</button>`)}</div>
      </div></div>`;
  }

  private renderWork() {
    const tool = (n: string) => html`<button aria-label=${n}>${icon(n)}</button>`;
    return html`<main class="work">
      <aside class="pal">
        <div class="grip"></div>
        <div class="set">${DRAW.map(tool)}</div>
        <hr class="dark" /><div class="grip"></div>
        ${tool("s1")}<button class="half" aria-label="s2">${icon("s2")}</button><div class="tick"></div>
        ${SNAPS.map((g) => html`<hr />${g.map(tool)}`)}<hr />${tool("s4")}
      </aside>
      <div class="canvas">
        <svg aria-hidden="true">
          <path d=${MINOR} stroke="#252d37"></path>
          <path d=${MAJOR} stroke="#2d3542"></path>
          <path d="M293.500 0v799" stroke="#1f5430"></path>
          <path d="M294 799.500h4000" stroke="#66232a"></path>
          <path d="M309 245.500h45M362 245.500h45M358.500 195v46M358.500 250v46" stroke="#dadcde"></path>
          <rect x="355.500" y="242.500" width="6" height="6" fill="none" stroke="#dadcde"></rect>
        </svg>
        <div class="mdi">
          <button aria-label="最小化图形"><svg class="ic" width="14" height="18"><path class="hf" d="M1 10h11v4H1z"></path></svg></button>
          <button aria-label="还原图形"><svg class="ic" width="14" height="18"><path d="M3 8h6v6H3z" fill="none" stroke="#f4f5f6" stroke-width="2"></path><path class="h" d="M5 4.500h7.500V12"></path></svg></button>
          <button aria-label="关闭图形"><svg class="ic" width="14" height="18"><path class="h2" d="M3 5l7 8M10 5l-7 8"></path></svg></button>
        </div>
        <section class="cmd">
          <div class="side"><div class="grip"></div><button aria-label="关闭命令行">${icon("cmdx")}</button><button aria-label="自定义">${icon("wrench")}</button></div>
          <div class="main">
            <div class="hist"><div class="clip">
              <p>正在重生成模型。</p>
              <p><span>AutoCAD </span>菜单实用工具<span> </span>已加载。<span>*</span>取消<span>*</span></p>
              <p>命令<span>:</span></p><p>命令<span>:</span></p><p>命令<span>:</span></p>
            </div></div>
            <div class="entry">${icon("prompt")}${bigArrow}<input aria-label="命令行" placeholder="键入命令" /><i class="ar up"></i></div>
          </div>
        </section>
      </div>
      <aside class="rpal"><svg aria-hidden="true">
        ${SLIVERS.map(([y, h, c]) => svg`<rect x=${c === "d" ? 0 : 3} y=${y} width="6" height=${h} fill=${SLIVER_COLOURS[c]}></rect>`)}
      </svg></aside>
    </main>`;
  }

  private renderStatus() {
    const slash = html`<svg class="slash" viewBox="0 0 10 18"><path d="M2 17L8 1"></path></svg>`;
    return html`<footer class="status">
      <nav class="layouts">
        <button class="menu" aria-label="布局菜单">${icon("burger")}</button>
        <button class="model">模型</button>
        <button class="lay">布局1</button>${slash}
        <button class="lay">布局2</button>${slash}
        <button class="add" aria-label="新建布局">${icon("plus")}</button>${slash}
      </nav>
      <div class="cells">
        <div class="xy">2.1757, 18.2285, 0.0000</div>
        <button class="ms g3">模型</button>
        ${this.cell("grid", "g3")}${this.cell("snap")}${this.more("捕捉")}
        ${this.cell("infer", "g3")}${this.cell("dyn", "g2")}
        ${this.cell("ortho", "g1")}${this.cell("polar")}${this.more("极轴")}${this.cell("iso")}${this.more("等轴测")}
        ${this.cell("otrack", "g1")}${this.cell("osnap")}${this.more("对象捕捉")}
        ${this.cell("lw", "g1")}${this.cell("transp", "g2")}${this.cell("cycle", "g1")}
        ${this.cell("osnap3", "g1")}${this.more("三维对象捕捉")}
        ${this.cell("ducs", "g3")}${this.cell("filter")}${this.more("过滤")}${this.cell("gizmo")}${this.more("小控件")}
        ${this.cell("annovis", "g3")}${this.cell("annoauto")}${this.cell("anno")}
        <button class="sc">1:1 / 100%${bigArrow}</button>
        ${this.cell("gear", "g3")}${this.more("工作空间")}${this.cell("splus", "g1")}
        <label class="units g3">${icon("ruler")}<select aria-label="单位"><option>小数</option></select>${bigArrow}</label>
        ${this.cell("qprops", "g3")}${this.cell("lockui", "g2")}${this.more("锁定")}
        ${this.cell("isolate", "g1")}${this.cell("full", "g3")}<div class="cut g2"></div>
      </div>
    </footer>`;
  }

  render() {
    return html`${this.renderTitle()}${this.renderRibbon()}${this.renderTabs()}${this.renderWork()}${this.renderStatus()}`;
  }
}
